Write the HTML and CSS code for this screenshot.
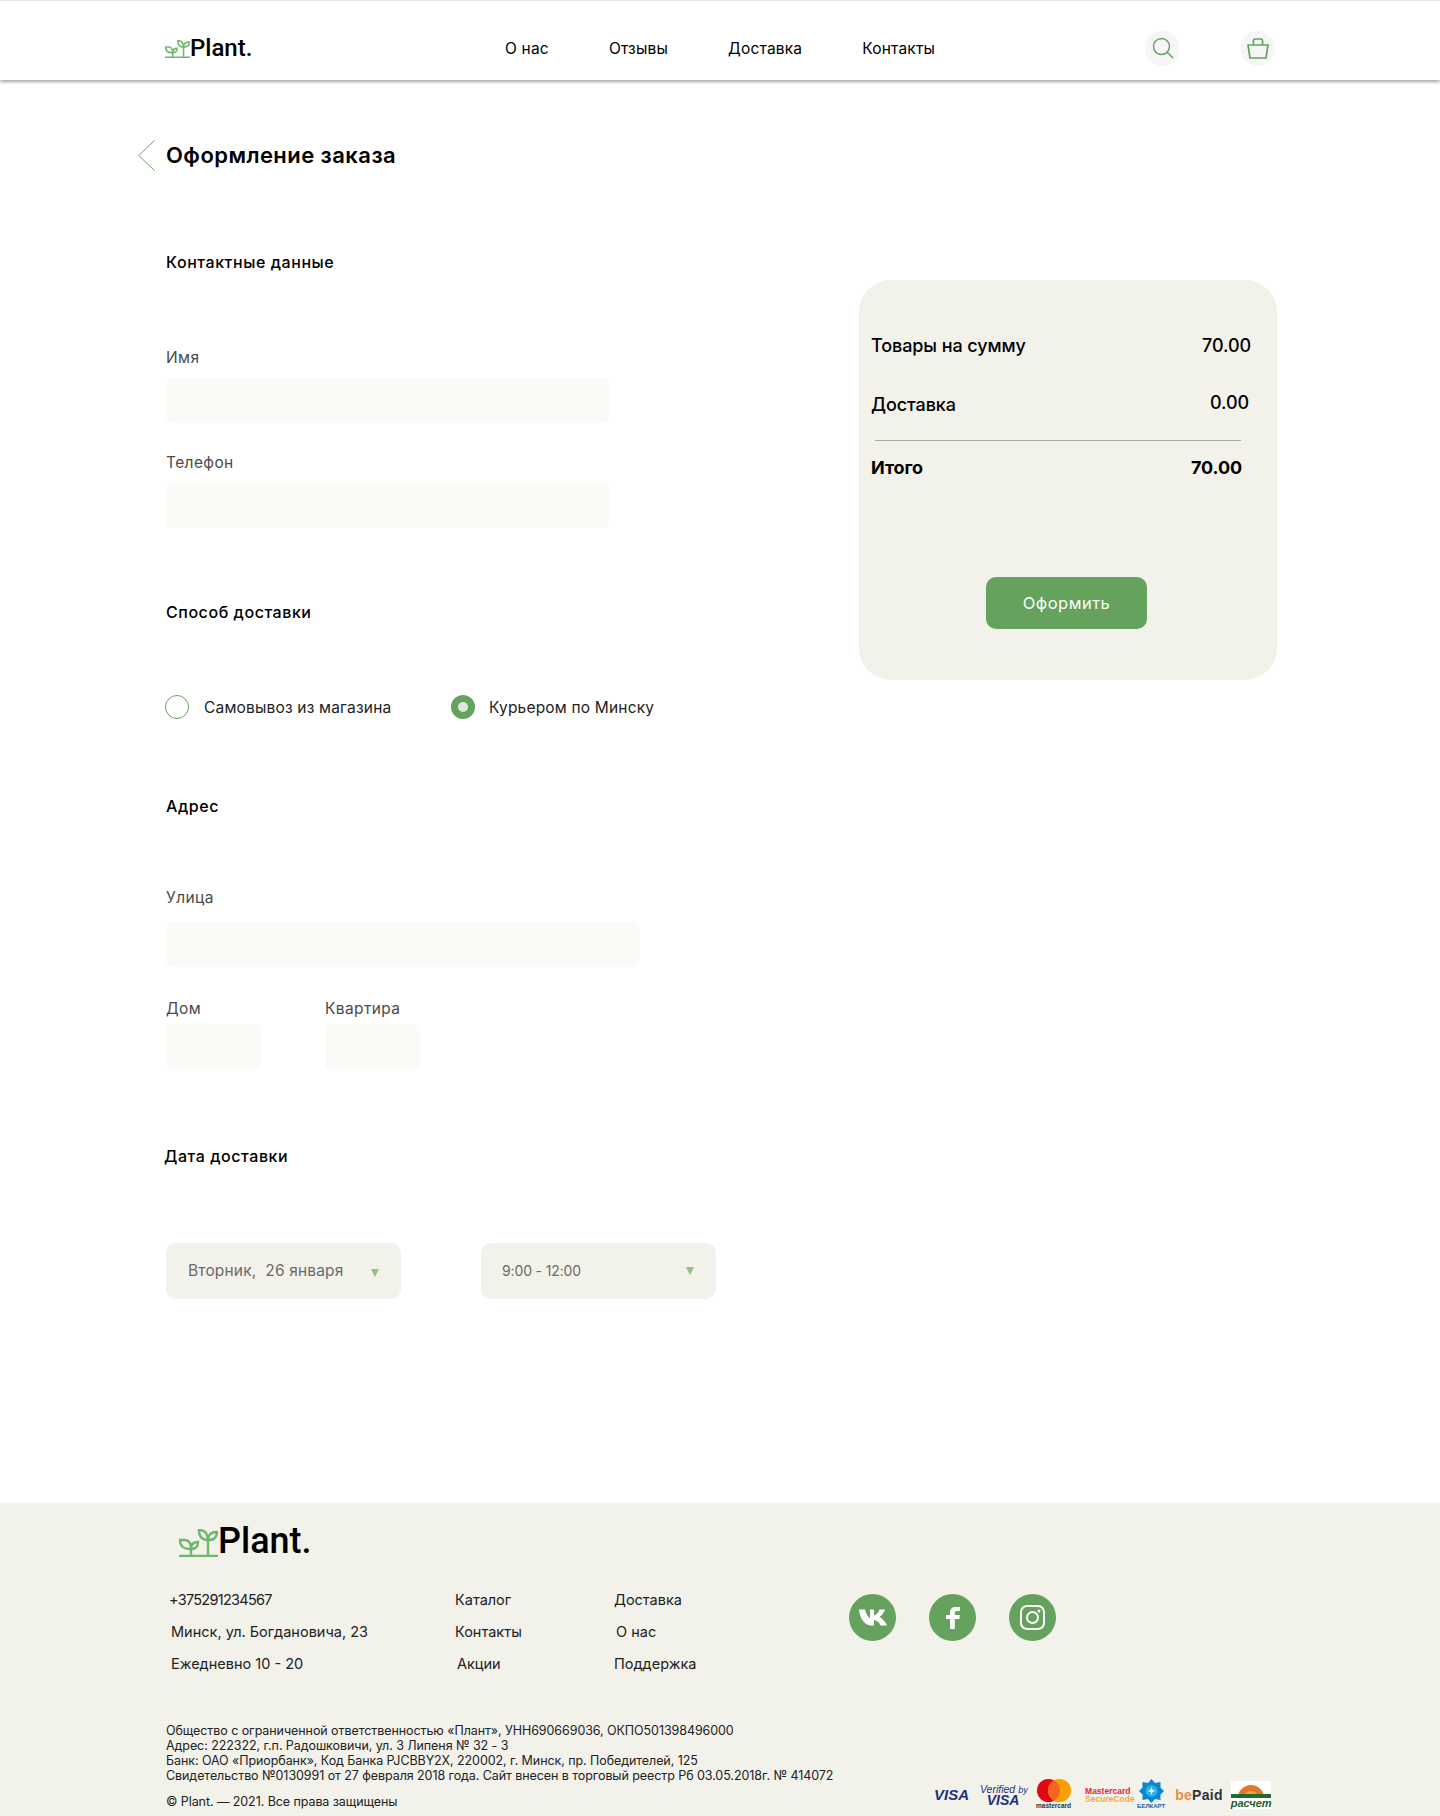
FILE: index.html
```html
<!DOCTYPE html>
<html lang="ru">
<head>
  <meta charset="UTF-8" />
  <meta name="viewport" content="width=device-width, initial-scale=1.0"/>
  <title>Оформление заказа</title>
  <link rel="stylesheet" href="styles.css">
</head>
<body>
  <svg class="sprites" width="0" height="0">
    <symbol id="plant" viewBox="0 0 39 28">
      <g fill="none" stroke="#6cb86c" stroke-width="2.4">
        <path d="M0 27H39M12 27V14M29 27V9"/>
        <path d="M12 20C5 20 1 18 1 11H6C10 11 12 15 12 20Z"/>
        <path d="M12 20C12 16 14 13 19 13C19 17 17 20 12 20Z"/>
        <path d="M29 11C22 11 20 7 20 1C26 1 29 4 29 11Z"/>
        <path d="M29 11C29 6 32 3 38 3C38 8 35 11 29 11Z"/>
      </g>
    </symbol>
  </svg>

  <header class="site-header">
    <a class="logo" href="#"><svg class="logo-icon"><use href="#plant"/></svg><span>Plant.</span></a>
    <nav class="main-nav">
      <a href="#">О нас</a>
      <a href="#">Отзывы</a>
      <a href="#">Доставка</a>
      <a href="#">Контакты</a>
    </nav>
    <div class="header-icons">
      <a class="round-icon" href="#">
        <svg width="22" height="22" viewBox="0 0 22 22" fill="none" stroke="#65a25e" stroke-width="1.5"><circle cx="9.5" cy="9.5" r="8"/><path d="M15.2 15.2L21 21"/></svg>
      </a>
      <a class="round-icon" href="#">
        <svg width="22" height="21" viewBox="0 0 22 21" fill="none" stroke="#65a25e" stroke-width="1.7"><path d="M1 7H21L19 20H3Z"/><path d="M6.500 7V2.500C6.500 1.500 7 1 8 1H14C15 1 15.500 1.500 15.500 2.500V7"/></svg>
      </a>
    </div>
  </header>

  <main class="checkout">
    <div class="checkout-form">
      <div class="page-head">
        <svg class="back-arrow" width="17" height="31" viewBox="0 0 17 31" fill="none" stroke="#65a25e"><path d="M16.5 0.5L0.7 15.5L16.5 30.5"/></svg>
        <h1>Оформление заказа</h1>
      </div>

      <h2 class="section-title first">Контактные данные</h2>
      <label class="field-label name-label">Имя</label>
      <input class="text-input wide" type="text" />
      <label class="field-label next-label">Телефон</label>
      <input class="text-input wide" type="text" />

      <h2 class="section-title">Способ доставки</h2>
      <div class="radio-row">
        <div class="radio-item pickup"><span class="radio"></span>Самовывоз из магазина</div>
        <div class="radio-item"><span class="radio checked"></span>Курьером по Минску</div>
      </div>

      <h2 class="section-title address-title">Адрес</h2>
      <label class="field-label street-label">Улица</label>
      <input class="text-input street" type="text" />
      <div class="house-row">
        <div>
          <label class="field-label">Дом</label>
          <input class="text-input small" type="text" />
        </div>
        <div>
          <label class="field-label">Квартира</label>
          <input class="text-input small" type="text" />
        </div>
      </div>

      <h2 class="section-title date-title">Дата доставки</h2>
      <div class="select-row">
        <div class="select-box">Вторник,&nbsp; 26 января<span class="select-arrow low"></span></div>
        <div class="select-box time">9:00 - 12:00<span class="select-arrow"></span></div>
      </div>
    </div>

    <aside class="summary">
      <div class="summary-row"><span>Товары на сумму</span><span>70.00</span></div>
      <div class="summary-row delivery"><span>Доставка</span><span class="delivery-price">0.00</span></div>
      <div class="summary-line"></div>
      <div class="summary-row total"><span>Итого</span><span>70.00</span></div>
      <button class="submit-btn" type="button">Оформить</button>
    </aside>
  </main>

  <footer class="site-footer">
    <a class="logo footer-logo" href="#"><svg class="logo-icon"><use href="#plant"/></svg><span>Plant.</span></a>
    <div class="footer-main">
      <ul class="footer-col contacts">
        <li class="phone">+375291234567</li>
        <li>Минск, ул. Богдановича, 23</li>
        <li>Ежедневно 10 - 20</li>
      </ul>
      <ul class="footer-col links-a">
        <li>Каталог</li>
        <li>Контакты</li>
        <li class="shift">Акции</li>
      </ul>
      <ul class="footer-col links-b">
        <li>Доставка</li>
        <li class="shift">О нас</li>
        <li>Поддержка</li>
      </ul>
      <div class="socials">
        <a class="social" href="#"><svg width="28" height="17" viewBox="0 0 28 17" fill="#fff"><path d="M0 0.5H6C7 5 9 8 11 9V0.5H15V6.5C17 6 19.5 3.5 20.5 0.5H26C25 3.5 23 6.5 20.5 8C23 9 26 12 28 16.5H21.5C20.5 13.5 18 11.5 15 11V16.5H13C6 16.5 1 10.5 0 0.5Z"/></svg></a>
        <a class="social" href="#"><svg width="14" height="22" viewBox="0 0 14 22" fill="#fff"><path d="M4 22V12H0V8H4V5.5C4 2 6.2 0 9.5 0H14V4H11C9.5 4 8.8 4.8 8.8 6V8H14L13.3 12H8.8V22Z"/></svg></a>
        <a class="social" href="#"><svg width="25" height="25" viewBox="0 0 25 25" fill="none" stroke="#fff" stroke-width="2"><rect x="1" y="1" width="23" height="23" rx="6"/><circle cx="12.5" cy="12.5" r="5.5"/><circle cx="19" cy="6" r="1.4" fill="#fff" stroke="none"/></svg></a>
      </div>
    </div>
    <div class="footer-bottom">
      <div class="legal">
        <p>Общество с ограниченной ответственностью «Плант», УНН690669036, ОКПО501398496000</p>
        <p>Адрес: 222322, г.п. Радошковичи, ул. 3 Липеня № 32 - 3</p>
        <p>Банк: ОАО «Приорбанк», Код Банка PJCBBY2X, 220002, г. Минск, пр. Победителей, 125</p>
        <p>Свидетельство №0130991 от 27 февраля 2018 года. Сайт внесен в торговый реестр Рб 03.05.2018г. № 414072</p>
        <p class="copyright">© Plant. — 2021. Все права защищены</p>
      </div>
      <div class="payments">
        <span class="pay-visa">VISA</span>
        <span class="pay-verified">Verified <small>by</small><b>VISA</b></span>
        <span class="pay-mc">
          <svg width="34" height="23" viewBox="0 0 34 23"><circle cx="11.5" cy="11.5" r="11.5" fill="#e30613"/><circle cx="22.5" cy="11.5" r="11.5" fill="#f9a000"/><path d="M17 1.4a11.5 11.5 0 0 1 0 20.2a11.5 11.5 0 0 1 0-20.2Z" fill="#f26522"/></svg>
          <span>mastercard</span>
        </span>
        <span class="pay-secure"><b>Mastercard</b><i>SecureCode</i></span>
        <span class="pay-belkart">
          <svg width="25" height="24" viewBox="0 0 25 24"><path d="M12.5 0L16 4L21.5 3L21.5 8.500L25 12L21.500 15.500L21.500 21L16 20L12.500 24L9 20L3.500 21L3.500 15.500L0 12L3.500 8.500L3.500 3L9 4Z" fill="#0b86cf"/><circle cx="12.500" cy="12" r="6" fill="#27b3ea"/><path d="M12.500 8L13.500 11L16.500 12L13.500 13L12.500 16L11.500 13L8.500 12L11.500 11Z" fill="#fff"/></svg>
          <span>БЕЛКАРТ</span>
        </span>
        <span class="pay-bepaid"><em>be</em>Paid</span>
        <span class="pay-raschet">
          <svg width="40" height="17" viewBox="0 0 40 17"><path d="M7 17A13 13 0 0 1 33 17Z" fill="#e2762a"/><path d="M13 17A7 7 0 0 1 27 17Z" fill="#f0a63c"/><path d="M0 13H40V17H0Z" fill="#1f6b2c"/></svg>
          <span>расчет</span>
        </span>
      </div>
    </div>
  </footer>
</body>
</html>
```

FILE: styles.css
```css
* {
  box-sizing: border-box;
}
body {
  margin: 0;
  padding: 0;
  background-color: #fff;
  font-family: Inter, "Noto Sans", sans-serif;
  color: #000;
}
a {
  color: inherit;
  text-decoration: none;
}
ul {
  margin: 0;
  padding: 0;
  list-style: none;
}
p {
  margin: 0;
}
.sprites {
  position: absolute;
}

/* header */
.site-header {
  display: flex;
  align-items: center;
  height: 80px;
  padding: 15px 0 0 165px;
  border-top: 1px solid #e6e6e6;
  box-shadow: 0 2px 3px rgba(0, 0, 0, 0.35);
}
.logo {
  display: flex;
  align-items: flex-end;
  font-family: Roboto, sans-serif;
  font-weight: 500;
  font-size: 24px;
  line-height: 28px;
}
.site-header .logo {
  width: 88px;
}
.logo-icon {
  width: 25px;
  height: 18px;
  margin-bottom: 4px;
}
.main-nav {
  display: flex;
  gap: 60px;
  width: 440px;
  margin-left: 252px;
  font-size: 15.5px;
  letter-spacing: 0.012em;
}
.header-icons {
  display: flex;
  gap: 60px;
  margin-left: 200px;
}
.round-icon {
  display: flex;
  align-items: center;
  justify-content: center;
  width: 35px;
  height: 35px;
  border-radius: 50%;
  background-color: #f6f6f6;
}

/* form */
.checkout {
  display: flex;
  padding: 60px 0 0 166px;
}
.checkout-form {
  width: 693px;
}
.page-head {
  display: flex;
  align-items: center;
  height: 30px;
  margin-left: -28px;
  gap: 11px;
}
.page-head h1 {
  margin: 0;
  font-size: 22px;
  font-weight: 600;
  letter-spacing: 0.02em;
}
.section-title {
  margin: 74px 0 0;
  font-size: 16px;
  font-weight: 500;
  line-height: 20px;
  letter-spacing: 0.035em;
}
.section-title.first {
  margin-top: 82px;
}
.section-title.address-title {
  margin-top: 77px;
}
.section-title.date-title {
  margin-top: 77px;
  margin-left: -2px;
}
.field-label {
  display: block;
  margin-bottom: 5px;
  font-size: 15.500px;
  line-height: 20px;
  color: #4a4a4a;
  letter-spacing: 0.025em;
}
.name-label {
  margin-top: 76px;
  margin-bottom: 10px;
}
.next-label {
  margin-top: 30px;
  margin-bottom: 10px;
}
.street-label {
  margin-top: 72px;
  margin-bottom: 14px;
}
.text-input {
  display: block;
  height: 45px;
  border: none;
  border-radius: 6px;
  background-color: #fafaf6;
}
.text-input.wide {
  width: 443px;
}
.text-input.street {
  width: 474px;
}
.text-input.small {
  width: 95px;
}
.radio-row {
  display: flex;
  margin-top: 73px;
  font-size: 15.500px;
  letter-spacing: 0.012em;
  color: #222;
}
.radio-item {
  display: flex;
  align-items: center;
  gap: 14px;
  height: 24px;
}
.radio-item.pickup {
  width: 286px;
  gap: 15px;
  margin-left: -1px;
}
.radio {
  display: block;
  width: 24px;
  height: 24px;
  border: 1px solid #65a25e;
  border-radius: 50%;
}
.radio.checked {
  border: 7px solid #65a25e;
  background-color: #dfe8dc;
}
.house-row {
  display: flex;
  gap: 64px;
  margin-top: 32px;
}
.select-row {
  display: flex;
  gap: 80px;
  margin-top: 77px;
}
.select-box {
  position: relative;
  width: 235px;
  height: 56px;
  padding-left: 22px;
  border-radius: 10px;
  background-color: #f2f1ea;
  font-size: 15.500px;
  line-height: 56px;
  letter-spacing: 0.01em;
  color: #6b6b66;
}
.select-box.time {
  padding-left: 21px;
  font-size: 14px;
  letter-spacing: -0.01em;
}
.select-arrow {
  position: absolute;
  top: 24px;
  right: 22px;
  border-top: 8px solid #93bd8b;
  border-left: 4.5px solid transparent;
  border-right: 4.5px solid transparent;
}
.select-arrow.low {
  top: 26px;
}

/* order summary */
.summary {
  width: 418px;
  height: 400px;
  margin-top: 140px;
  padding: 54px 0 0 12px;
  border-radius: 32px;
  background-color: #f2f1ea;
}
.summary-row {
  display: flex;
  justify-content: space-between;
  height: 24px;
  padding-right: 26px;
  font-size: 18px;
  font-weight: 500;
  line-height: 24px;
  letter-spacing: -0.005em;
}
.summary-row.delivery {
  margin-top: 35px;
  padding-right: 28px;
}
.delivery-price {
  margin-top: -2px;
}
.summary-row.total {
  margin-top: 15px;
  padding-right: 35px;
  font-weight: 700;
}
.summary-line {
  width: 366px;
  height: 1px;
  margin: 23px 0 0 4px;
  background-color: #a8a8a4;
}
.submit-btn {
  display: block;
  width: 161px;
  height: 52px;
  margin: 97px 0 0 115px;
  border: none;
  border-radius: 10px;
  background-color: #65a25e;
  color: #fff;
  font-family: inherit;
  font-size: 16.500px;
  letter-spacing: 0.03em;
  cursor: pointer;
}

/* footer */
.site-footer {
  height: 313px;
  margin-top: 204px;
  padding: 20px 0 0 166px;
  background-color: #f2f1ea;
}
.footer-logo {
  margin-left: 13px;
  font-size: 36px;
  line-height: 36px;
}
.footer-logo .logo-icon {
  width: 39px;
  height: 28px;
  margin-bottom: 2px;
}
.footer-main {
  display: flex;
  margin-top: 31px;
  font-size: 14.500px;
  color: #222;
}
.footer-col li {
  height: 20px;
  margin-bottom: 12px;
  line-height: 20px;
}
.contacts {
  width: 289px;
  padding-left: 5px;
}
.phone {
  margin-left: -2px;
  letter-spacing: -0.05em;
}
.links-a {
  width: 159px;
}
.links-b {
  width: 235px;
}
.shift {
  margin-left: 2px;
}
.socials {
  display: flex;
  gap: 33px;
  margin-top: 4px;
}
.social {
  display: flex;
  align-items: center;
  justify-content: center;
  width: 47px;
  height: 47px;
  border-radius: 50%;
  background-color: #65a25e;
}
.footer-bottom {
  display: flex;
  align-items: flex-end;
  margin-top: 37px;
}
.legal {
  width: 768px;
  font-size: 12.500px;
  line-height: 15px;
  letter-spacing: -0.006em;
  color: #222;
}
.copyright {
  margin-top: 11px;
}

/* payment logos */
.payments {
  display: flex;
  align-items: center;
  gap: 10px;
  height: 31px;
  margin-bottom: -1px;
}
.pay-visa {
  width: 36px;
  font-family: "Liberation Sans", sans-serif;
  font-size: 15px;
  font-weight: 700;
  font-style: italic;
  color: #20327a;
}
.pay-verified {
  width: 46px;
  font-family: "Liberation Sans", sans-serif;
  font-size: 10.500px;
  font-style: italic;
  line-height: 10px;
  text-align: center;
  white-space: nowrap;
  color: #20327a;
}
.pay-verified small {
  font-size: 9px;
}
.pay-verified b {
  display: block;
  font-size: 14px;
}
.pay-mc,
.pay-belkart {
  display: flex;
  flex-direction: column;
  align-items: center;
  font-family: "Liberation Sans", sans-serif;
  font-weight: 700;
}
.pay-mc span {
  font-size: 6.500px;
  line-height: 8px;
  color: #333;
}
.pay-secure {
  display: flex;
  flex-direction: column;
  width: 43px;
  margin-left: 4px;
  font-family: "Liberation Sans", sans-serif;
  font-size: 8.500px;
  line-height: 8px;
}
.pay-secure b {
  color: #e8243c;
}
.pay-secure i {
  font-style: normal;
  font-weight: 700;
  color: #f5a840;
}
.pay-belkart {
  margin-left: -1px;
}
.pay-belkart span {
  font-size: 6px;
  line-height: 7px;
  color: #1a5a9c;
}
.pay-bepaid {
  width: 46px;
  font-family: "Liberation Sans", sans-serif;
  font-size: 14px;
  font-weight: 700;
  letter-spacing: 0.02em;
  color: #333;
}
.pay-bepaid em {
  font-style: normal;
  color: #f08a3c;
}
.pay-raschet {
  display: flex;
  flex-direction: column;
  align-items: center;
  width: 40px;
  height: 28px;
  background-color: #fff;
  font-family: "Liberation Sans", sans-serif;
  font-size: 11px;
  font-weight: 700;
  font-style: italic;
  line-height: 11px;
  color: #1f5a2a;
}
```
